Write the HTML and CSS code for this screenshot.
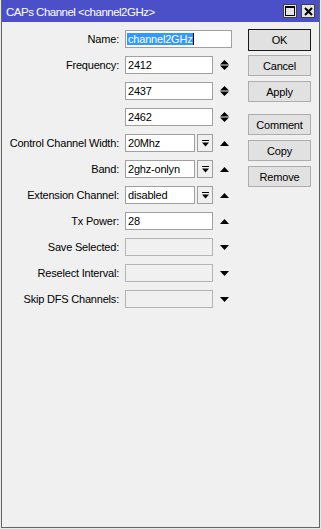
FILE: index.html
```html
<!DOCTYPE html>
<html lang="en">
<head>
    <meta charset="UTF-8">
    <title>CAPs Channel</title>
    <link rel="stylesheet" href="styles.css">
</head>
<body>
<div class="window">
  <div class="frame">
    <div class="titlebar">
        <span class="title">CAPs Channel &lt;channel2GHz&gt;</span>
        <span class="tbtn">
            <svg width="10" height="10" viewBox="0 0 10 10"><rect x="0.5" y="0.5" width="9" height="9" fill="none" stroke="#000"/><rect x="0" y="0" width="10" height="2" fill="#000"/></svg>
        </span>
        <span class="tbtn">
            <svg width="9" height="9" viewBox="0 0 9 9"><path d="M1 1L8 8M8 1L1 8" stroke="#000" stroke-width="2"/></svg>
        </span>
    </div>

    <div class="content">
        <div class="form">
            <div class="row">
                <span class="label">Name:</span>
                <div class="field">
                    <span class="input wide"><span class="sel">channel2GHz</span><span class="caret"></span></span>
                </div>
            </div>
            <div class="row">
                <span class="label">Frequency:</span>
                <div class="field">
                    <span class="input">2412</span>
                    <svg class="arrow" width="9" height="10" viewBox="0 0 9 10"><path d="M0 4.5L4.5 0L9 4.5Z M0 5.5L9 5.5L4.5 10Z" fill="#000"/></svg>
                </div>
            </div>
            <div class="row">
                <span class="label"></span>
                <div class="field">
                    <span class="input">2437</span>
                    <svg class="arrow" width="9" height="10" viewBox="0 0 9 10"><path d="M0 4.5L4.5 0L9 4.5Z M0 5.5L9 5.5L4.5 10Z" fill="#000"/></svg>
                </div>
            </div>
            <div class="row">
                <span class="label"></span>
                <div class="field">
                    <span class="input">2462</span>
                    <svg class="arrow" width="9" height="10" viewBox="0 0 9 10"><path d="M0 4.5L4.5 0L9 4.5Z M0 5.5L9 5.5L4.5 10Z" fill="#000"/></svg>
                </div>
            </div>
            <div class="row">
                <span class="label">Control Channel Width:</span>
                <div class="field">
                    <span class="input combo">20Mhz</span>
                    <span class="drop"><svg width="7" height="7" viewBox="0 0 7 7"><rect x="0" y="0" width="7" height="1" fill="#000"/><path d="M0 2.5L7 2.5L3.5 6.5Z" fill="#000"/></svg></span>
                    <svg class="arrow" width="9" height="5" viewBox="0 0 9 5"><path d="M0 5L4.5 0L9 5Z" fill="#000"/></svg>
                </div>
            </div>
            <div class="row">
                <span class="label">Band:</span>
                <div class="field">
                    <span class="input combo">2ghz-onlyn</span>
                    <span class="drop"><svg width="7" height="7" viewBox="0 0 7 7"><rect x="0" y="0" width="7" height="1" fill="#000"/><path d="M0 2.5L7 2.5L3.5 6.5Z" fill="#000"/></svg></span>
                    <svg class="arrow" width="9" height="5" viewBox="0 0 9 5"><path d="M0 5L4.5 0L9 5Z" fill="#000"/></svg>
                </div>
            </div>
            <div class="row">
                <span class="label">Extension Channel:</span>
                <div class="field">
                    <span class="input combo">disabled</span>
                    <span class="drop"><svg width="7" height="7" viewBox="0 0 7 7"><rect x="0" y="0" width="7" height="1" fill="#000"/><path d="M0 2.5L7 2.5L3.5 6.5Z" fill="#000"/></svg></span>
                    <svg class="arrow" width="9" height="5" viewBox="0 0 9 5"><path d="M0 5L4.5 0L9 5Z" fill="#000"/></svg>
                </div>
            </div>
            <div class="row">
                <span class="label">Tx Power:</span>
                <div class="field">
                    <span class="input">28</span>
                    <svg class="arrow" width="9" height="5" viewBox="0 0 9 5"><path d="M0 5L4.5 0L9 5Z" fill="#000"/></svg>
                </div>
            </div>
            <div class="row">
                <span class="label">Save Selected:</span>
                <div class="field">
                    <span class="input off"></span>
                    <svg class="arrow" width="9" height="5" viewBox="0 0 9 5"><path d="M0 0L9 0L4.5 5Z" fill="#000"/></svg>
                </div>
            </div>
            <div class="row">
                <span class="label">Reselect Interval:</span>
                <div class="field">
                    <span class="input off"></span>
                    <svg class="arrow" width="9" height="5" viewBox="0 0 9 5"><path d="M0 0L9 0L4.5 5Z" fill="#000"/></svg>
                </div>
            </div>
            <div class="row">
                <span class="label">Skip DFS Channels:</span>
                <div class="field">
                    <span class="input off"></span>
                    <svg class="arrow" width="9" height="5" viewBox="0 0 9 5"><path d="M0 0L9 0L4.5 5Z" fill="#000"/></svg>
                </div>
            </div>
        </div>

        <div class="buttons">
            <button class="btn default">OK</button>
            <button class="btn">Cancel</button>
            <button class="btn group-end">Apply</button>
            <button class="btn">Comment</button>
            <button class="btn">Copy</button>
            <button class="btn">Remove</button>
        </div>
    </div>
  </div>
</div>
</body>
</html>
```

FILE: styles.css
```css
body {
    margin: 0;
    font-family: "Liberation Sans", Arial, sans-serif;
    font-size: 11px;
    color: #000;
}
.window {
    width: 321px;
    height: 529px;
    box-sizing: border-box;
    border: 1px solid #e8e8e8;
    border-top: none;
    background: #f0f0f0;
}
.frame {
    height: 100%;
    box-sizing: border-box;
    border: 1px solid #646464;
    border-top: none;
}
.titlebar {
    height: 22px;
    background: #4c50c8;
    display: flex;
    align-items: center;
    padding: 0 4px 0 4px;
}
.title {
    flex: 1;
    color: #fff;
    font-size: 11.5px;
    letter-spacing: -0.5px;
    padding-top: 1px;
}
.tbtn {
    width: 14px;
    height: 14px;
    box-sizing: border-box;
    border: 1px solid #404040;
    background: #e4e4e4;
    display: flex;
    align-items: center;
    justify-content: center;
    margin-left: 4px;
}
.content {
    display: flex;
    padding-top: 8px;
}
.form {
    width: 246px;
}
.row {
    display: grid;
    grid-template-columns: 117px 107px;
    column-gap: 6px;
    height: 18px;
    margin-bottom: 8px;
}
.label {
    text-align: right;
    line-height: 18px;
    letter-spacing: -0.2px;
    white-space: nowrap;
}
.field {
    display: flex;
    align-items: center;
}
.input {
    width: 88px;
    height: 18px;
    box-sizing: border-box;
    border: 1px solid #a0a0a0;
    background: #fff;
    padding-left: 2px;
    line-height: 16px;
    letter-spacing: -0.2px;
    white-space: nowrap;
    overflow: hidden;
}
.input.wide {
    width: 107px;
    padding-left: 1px;
}
.input.combo {
    width: 70px;
}
.input.off {
    background: #f0f0f0;
    border-color: #b4b4b4;
}
.sel {
    background: #3399ff;
    color: #fff;
    padding: 0 1px 0 1px;
}
.caret {
    display: inline-block;
    width: 1px;
    height: 12px;
    background: #000;
    vertical-align: -2px;
}
.drop {
    width: 16px;
    height: 18px;
    box-sizing: border-box;
    border: 1px solid #a0a0a0;
    margin-left: 2px;
    display: flex;
    align-items: center;
    justify-content: center;
}
.arrow {
    margin-left: 7px;
}
.buttons {
    display: flex;
    flex-direction: column;
    margin-top: -1px;
}
.btn {
    width: 63px;
    height: 21px;
    margin: 0 0 5px 0;
    padding: 0;
    box-sizing: border-box;
    border: 1px solid #adadad;
    background: #e1e1e1;
    font-family: "Liberation Sans", Arial, sans-serif;
    font-size: 11px;
    letter-spacing: -0.2px;
    color: #000;
}
.btn.default {
    height: 22px;
    border: 1px solid #1a1a1a;
    margin-bottom: 4px;
}
.btn.group-end {
    margin-bottom: 12px;
}
```
